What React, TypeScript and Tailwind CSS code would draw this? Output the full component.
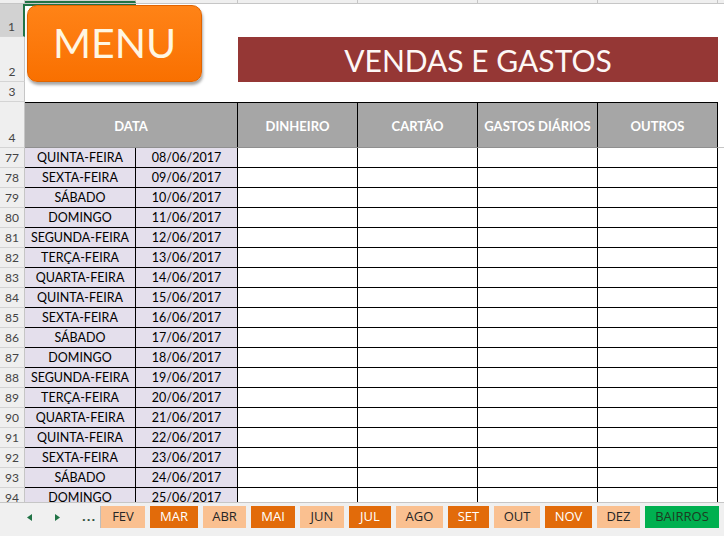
import React from 'react'

const DIAS = ['QUINTA-FEIRA', 'SEXTA-FEIRA', 'SÁBADO', 'DOMINGO', 'SEGUNDA-FEIRA', 'TERÇA-FEIRA', 'QUARTA-FEIRA']

const linhas = Array.from({ length: 18 }, (_, i) => ({
  n: 77 + i,
  dia: DIAS[i % 7],
  data: `${String(8 + i).padStart(2, '0')}/06/2017`,
}))

const colunas = ['DINHEIRO', 'CARTÃO', 'GASTOS DIÁRIOS', 'OUTROS']

interface Aba { nome: string; w: string; cor: string }

const abas: Aba[] = [
  { nome: 'FEV', w: 'w-[44px]', cor: 'bg-[#fac090] text-[#262626]' },
  { nome: 'MAR', w: 'w-[48px]', cor: 'bg-[#e26b0a] text-white' },
  { nome: 'ABR', w: 'w-[43px]', cor: 'bg-[#fac090] text-[#262626]' },
  { nome: 'MAI', w: 'w-[44px]', cor: 'bg-[#e26b0a] text-white' },
  { nome: 'JUN', w: 'w-[44px]', cor: 'bg-[#fac090] text-[#262626]' },
  { nome: 'JUL', w: 'w-[42px]', cor: 'bg-[#e26b0a] text-white' },
  { nome: 'AGO', w: 'w-[47px]', cor: 'bg-[#fac090] text-[#262626]' },
  { nome: 'SET', w: 'w-[41px]', cor: 'bg-[#e26b0a] text-white' },
  { nome: 'OUT', w: 'w-[46px]', cor: 'bg-[#fac090] text-[#262626]' },
  { nome: 'NOV', w: 'w-[47px]', cor: 'bg-[#e26b0a] text-white' },
  { nome: 'DEZ', w: 'w-[43px]', cor: 'bg-[#fac090] text-[#262626]' },
  { nome: 'BAIRROS', w: 'w-[74px]', cor: 'bg-[#00b050] text-[#1d3b22]' },
]

function NumLinha({ n, h, ativa }: { n: number; h: string; ativa?: boolean }) {
  return (
    <div className={`${h} w-[25px] shrink-0 flex items-end justify-center text-[12px] text-[#444] border-b border-[#d4d4d4] ${ativa ? 'bg-[#d2d2d2] border-r-2 border-r-[#217346]' : 'bg-[#efefef] border-r border-r-[#c6c6c6]'}`}>
      {n}
    </div>
  )
}

export default function App() {
  return (
    <div className="w-[724px] h-[536px] overflow-hidden bg-white flex flex-col" style={{ fontFamily: 'Lato, "Open Sans", sans-serif' }}>
      <div className="h-[502px] overflow-hidden flex flex-col">

        {/* cabeçalho de colunas */}
        <div className="h-[4px] shrink-0 flex bg-[#efefef] border-b border-[#c6c6c6]">
          <div className="w-[25px] border-r border-[#c6c6c6]" />
          <div className="w-[111px] bg-[#d2d2d2] border-r border-[#c6c6c6] border-b-2 border-b-[#217346]" />
          <div className="w-[102px] border-r border-[#c6c6c6]" />
          <div className="w-[120px] border-r border-[#c6c6c6]" />
          <div className="w-[120px] border-r border-[#c6c6c6]" />
          <div className="w-[120px] border-r border-[#c6c6c6]" />
          <div className="w-[120px] border-r border-[#c6c6c6]" />
        </div>

        {/* linhas 1 a 3 */}
        <div className="flex shrink-0">
          <div className="flex flex-col">
            <NumLinha n={1} h="h-[33px]" ativa />
            <NumLinha n={2} h="h-[45px]" />
            <NumLinha n={3} h="h-[20px]" />
          </div>
          <div className="flex-1 grid grid-cols-[111px_102px_480px_1fr] grid-rows-[33px_45px_20px]">
            <div className="col-start-1 row-start-1 border-t-2 border-[#217346]" />
            <button className="relative z-10 col-start-1 col-span-2 row-start-1 row-span-2 ml-[2px] mt-[1px] w-[175px] h-[77px] rounded-[10px] border border-[#e06400] bg-gradient-to-b from-[#ff8316] to-[#f97000] shadow-[1px_3px_3px_rgba(0,0,0,0.35)] text-[#fff6e2] text-[41px] leading-none pb-[2px]">
              MENU
            </button>
            <div className="col-start-3 row-start-2 bg-[#953735] flex items-center justify-center pt-[2px] text-[#fdf7f5] text-[30px]">
              VENDAS E GASTOS
            </div>
          </div>
        </div>

        {/* linha 4: títulos */}
        <div className="flex shrink-0">
          <NumLinha n={4} h="h-[46px]" />
          <div className="flex h-[46px] bg-[#a6a6a6] border-t border-black border-b border-b-[#8f8f8f] text-white font-bold text-[13px]">
            <div className="w-[213px] flex items-center justify-center pt-[3px] border-r border-black">DATA</div>
            {colunas.map(c => (
              <div key={c} className="w-[120px] flex items-center justify-center pt-[3px] border-r border-black whitespace-nowrap">{c}</div>
            ))}
          </div>
          <div className="flex-1 border-b border-[#c6c6c6]" />
        </div>

        {/* dias */}
        {linhas.map(l => (
          <div key={l.n} className="flex shrink-0">
            <NumLinha n={l.n} h="h-[20px]" />
            <div className="w-[111px] h-[20px] bg-[#e4dfec] border-r border-b border-black flex items-center justify-center pt-[2px] text-[12.5px] text-black">{l.dia}</div>
            <div className="w-[102px] h-[20px] bg-[#e4dfec] border-r border-b border-black flex items-center justify-center pt-[2px] text-[12.5px] text-black">{l.data}</div>
            {colunas.map(c => (
              <div key={c} className="w-[120px] h-[20px] border-r border-b border-black" />
            ))}
          </div>
        ))}
      </div>

      {/* abas das planilhas */}
      <div className="h-[34px] shrink-0 bg-[#f0f0f0] border-t border-[#c6c6c6] flex items-start pt-[3px]" style={{ fontFamily: '"Open Sans", Lato, sans-serif' }}>
        <div className="w-[100px] h-[22px] flex items-center">
          <svg width="5" height="7" viewBox="0 0 5 7" className="ml-[27px]"><path d="M5 0v7L0 3.5z" fill="#217346" /></svg>
          <svg width="5" height="7" viewBox="0 0 5 7" className="ml-[23px]"><path d="M0 0v7l5-3.5z" fill="#217346" /></svg>
          <span className="ml-[22px] text-[13px] font-bold text-[#2f4f3a] tracking-[1px] leading-[22px] -mt-[2px]">...</span>
        </div>
        <div className="w-px h-[22px] bg-[#bdbdbd]" />
        <div className="flex gap-[5px]">
          {abas.map(a => (
            <div key={a.nome} className={`${a.w} ${a.cor} h-[22px] flex items-center justify-center text-[13px]`}>
              {a.nome}
            </div>
          ))}
        </div>
      </div>
    </div>
  )
}
